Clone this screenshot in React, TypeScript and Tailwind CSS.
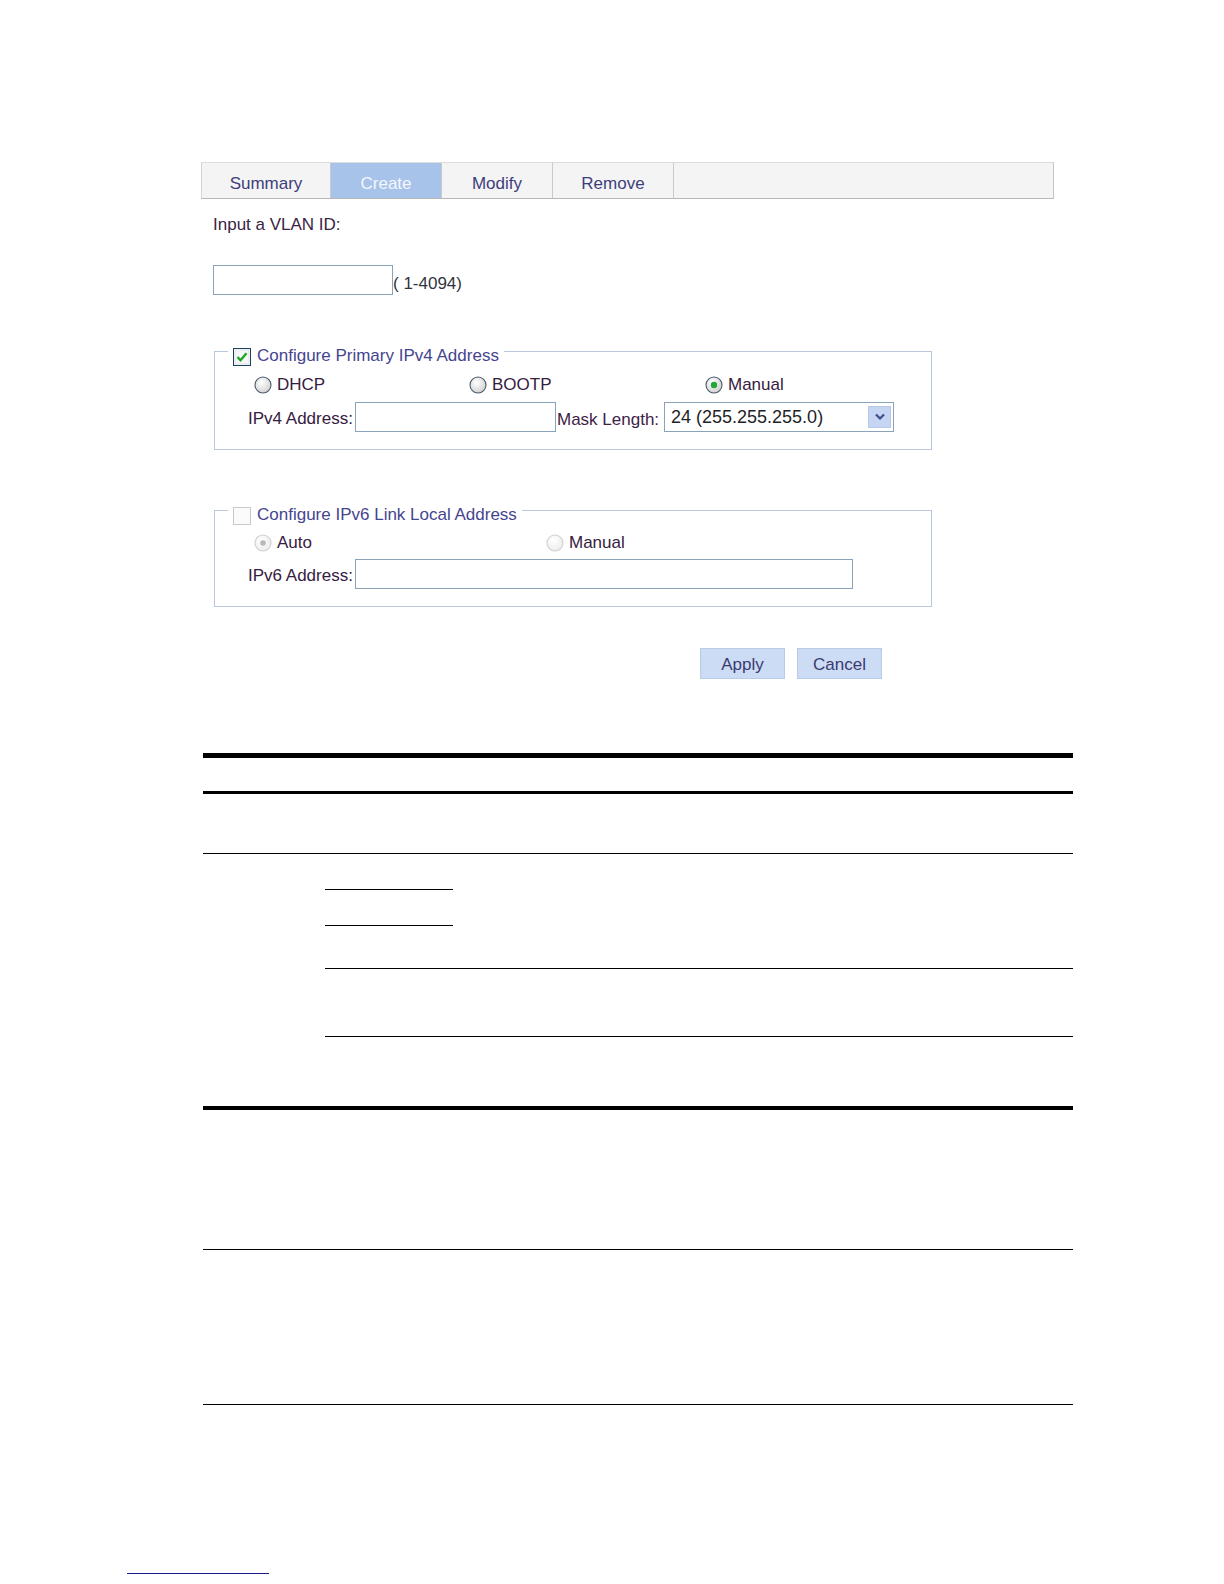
import type { ReactNode } from 'react';

const font = "font-['Liberation_Sans',Arial,sans-serif]";

type Tab = { label: string; width: string; active?: boolean };

const tabs: Tab[] = [
  { label: 'Summary', width: 'w-[129px]' },
  { label: 'Create', width: 'w-[111px]', active: true },
  { label: 'Modify', width: 'w-[111px]' },
  { label: 'Remove', width: 'w-[121px]' },
];

function CheckBox({ checked }: { checked: boolean }) {
  if (checked) {
    return (
      <svg width="18" height="18" viewBox="0 0 18 18" className="shrink-0">
        <rect x="0.5" y="0.5" width="17" height="17" fill="#fdfdfd" stroke="#1d3f5e" />
        <rect x="2" y="2" width="14" height="14" fill="#f4f6f8" stroke="#dfe4ea" />
        <path d="M4.5 9 L7.5 12.2 L13.5 5.2" fill="none" stroke="#1fa524" strokeWidth="2.4" />
      </svg>
    );
  }
  return (
    <svg width="18" height="18" viewBox="0 0 18 18" className="shrink-0">
      <rect x="0.5" y="0.5" width="17" height="17" fill="#fbfbfb" stroke="#c9c9c9" />
    </svg>
  );
}

function Radio({ checked = false, disabled = false }: { checked?: boolean; disabled?: boolean }) {
  const id = `${checked ? 'c' : 'u'}${disabled ? 'd' : 'e'}`;
  return (
    <svg width="18" height="18" viewBox="0 0 18 18" className="shrink-0">
      <defs>
        <radialGradient id={`rg-${id}`} cx="0.4" cy="0.35" r="0.7">
          <stop offset="0" stopColor="#ffffff" />
          <stop offset="1" stopColor={disabled ? '#ececec' : '#cfcfcf'} />
        </radialGradient>
      </defs>
      <circle cx="9" cy="9" r="8" fill={`url(#rg-${id})`} stroke={disabled ? '#cfcfcf' : '#4a5a6a'} strokeWidth="1.1" />
      {checked && !disabled && <circle cx="9" cy="9" r="3.2" fill="#22a83a" />}
      {checked && disabled && <circle cx="9" cy="9" r="2.8" fill="#b8b8b8" />}
    </svg>
  );
}

function Option({ children, checked, disabled }: { children: ReactNode; checked?: boolean; disabled?: boolean }) {
  return (
    <label className="flex items-center gap-[5px] text-[17px] leading-[20px] text-[#36203f]">
      <Radio checked={checked} disabled={disabled} />
      <span>{children}</span>
    </label>
  );
}

function TextBox({ className = '' }: { className?: string }) {
  return <div className={`h-[30px] border border-[#8aa2ba] bg-white ${className}`} />;
}

function Group({ checked, title, children, className = '' }: { checked: boolean; title: string; children: ReactNode; className?: string }) {
  return (
    <fieldset className={`ml-[13px] w-[718px] border border-[#b9c8da] pb-[17px] ${className}`}>
      <legend className="ml-[13px] flex h-[30px] items-end gap-[6px] px-[5px] text-[17px] leading-[20px] text-[#45458f]">
        <CheckBox checked={checked} />
        <span>{title}</span>
      </legend>
      <div className="pl-[33px]">{children}</div>
    </fieldset>
  );
}

export default function App() {
  return (
    <div className={`min-h-[1584px] bg-white ${font}`}>
      <div className="pl-[201px] pt-[162px]">
        <div className="flex h-[37px] w-[853px] border border-t-[#dcdcdc] border-b-[#b7b7b7] border-l-[#d4d4d4] border-r-[#c4c4c4] bg-[#f4f4f4]">
          {tabs.map((t) => (
            <div
              key={t.label}
              className={`flex items-center justify-center border-r border-[#cacaca] pt-[7px] text-[17px] leading-[20px] ${t.width} ${
                t.active ? 'bg-[#a8c3ea] text-[#f4f7fd]' : 'text-[#3e3e7c]'
              }`}
            >
              {t.label}
            </div>
          ))}
          <div className="flex-1" />
        </div>

        <div className="pl-[12px]">
          <p className="mt-[16px] text-[17px] leading-[20px] text-[#3a2444]">Input a VLAN ID:</p>
          <div className="mt-[30px] flex items-end">
            <TextBox className="w-[180px]" />
            <span className="pb-[1px] text-[17px] leading-[20px] text-[#333340]">( 1-4094)</span>
          </div>
        </div>

        <Group checked title="Configure Primary IPv4 Address" className="mt-[41px]">
          <div className="mt-[9px] ml-[6px] flex">
            <div className="w-[215px]">
              <Option>DHCP</Option>
            </div>
            <div className="w-[236px]">
              <Option>BOOTP</Option>
            </div>
            <Option checked>Manual</Option>
          </div>
          <div className="mt-[7px] flex items-center">
            <span className="w-[107px] whitespace-nowrap pt-[3px] text-[17px] leading-[20px] text-[#36203f]">IPv4 Address:</span>
            <TextBox className="w-[201px]" />
            <span className="ml-[1px] w-[107px] pt-[5px] text-[17px] leading-[20px] text-[#3e2248]">Mask Length:</span>
            <div className="flex h-[30px] w-[230px] items-center justify-between border border-[#8aa2ba] bg-white pl-[6px] pr-[2px]">
              <span className="text-[18px] leading-[22px] text-[#231f27]">24 (255.255.255.0)</span>
              <span className="flex h-[22px] w-[23px] items-center justify-center border border-[#b7c8e6] bg-[#c5d5f3]">
                <svg width="12" height="8" viewBox="0 0 12 8">
                  <path d="M2 1.5 L6 5.5 L10 1.5" fill="none" stroke="#3b4f86" strokeWidth="2.2" />
                </svg>
              </span>
            </div>
          </div>
        </Group>

        <Group checked={false} title="Configure IPv6 Link Local Address" className="mt-[45px]">
          <div className="mt-[8px] ml-[6px] flex">
            <div className="w-[292px]">
              <Option checked disabled>
                Auto
              </Option>
            </div>
            <Option disabled>Manual</Option>
          </div>
          <div className="mt-[6px] flex items-center">
            <span className="w-[107px] whitespace-nowrap pt-[3px] text-[17px] leading-[20px] text-[#36203f]">IPv6 Address:</span>
            <TextBox className="w-[498px]" />
          </div>
        </Group>

        <div className="ml-[499px] mt-[41px] flex gap-[12px]">
          <button className="h-[31px] w-[85px] border border-[#b8cbe9] bg-[#cddcf5] pt-[3px] text-[17px] leading-[20px] text-[#3a3a70]">
            Apply
          </button>
          <button className="h-[31px] w-[85px] border border-[#b8cbe9] bg-[#cddcf5] pt-[3px] text-[17px] leading-[20px] text-[#3a3a70]">
            Cancel
          </button>
        </div>
      </div>

      <div className="ml-[203px] w-[870px]">
        <div className="mt-[74px] h-[5px] bg-black" />
        <div className="mt-[33px] h-[3px] bg-black" />
        <div className="mt-[59px] h-[1px] bg-black" />
        <div className="ml-[122px] mt-[35px] h-[1px] w-[128px] bg-black" />
        <div className="ml-[122px] mt-[35px] h-[1px] w-[128px] bg-black" />
        <div className="ml-[122px] mt-[42px] h-[1px] w-[748px] bg-black" />
        <div className="ml-[122px] mt-[67px] h-[1px] w-[748px] bg-black" />
        <div className="mt-[69px] h-[4px] bg-black" />
        <div className="mt-[139px] h-[1px] bg-black" />
        <div className="mt-[154px] h-[1px] bg-black" />
      </div>

      <div className="ml-[127px] mt-[168px] h-[1px] w-[142px] bg-[#1a1a8c]" />
    </div>
  );
}
